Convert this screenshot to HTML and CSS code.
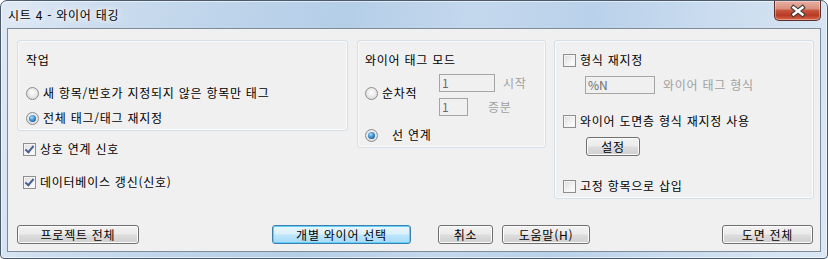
FILE: index.html
```html
<!DOCTYPE html>
<html lang="ko">
<head>
    <meta charset="UTF-8">
    <title>시트 4 - 와이어 태깅</title>
    <link rel="stylesheet" href="styles.css">
</head>
<body>
    <div class="window">
        <!-- Title bar -->
        <div class="titlebar">
            <span class="title">시트 4 - 와이어 태깅</span>
            <div class="close-btn">
                <svg width="45" height="18" viewBox="0 0 45 18">
                    <path d="M18.5 5.5 L27.5 12.5 M27.5 5.5 L18.5 12.5" stroke="#3b3b3b" stroke-width="4.6" stroke-linecap="square" fill="none"/>
                    <path d="M18.5 5.5 L27.5 12.5 M27.5 5.5 L18.5 12.5" stroke="#ffffff" stroke-width="2.4" stroke-linecap="square" fill="none"/>
                </svg>
            </div>
        </div>

        <div class="client">
            <div class="top-row">
                <!-- Left column -->
                <div class="col-left">
                    <div class="group group-job">
                        <div class="group-title">작업</div>
                        <div class="opt opt-new"><span class="radio"></span>새 항목/번호가 지정되지 않은 항목만 태그</div>
                        <div class="opt opt-all"><span class="radio checked"></span>전체 태그/태그 재지정</div>
                    </div>
                    <div class="opt cb-link"><span class="check checked"></span>상호 연계 신호</div>
                    <div class="opt cb-db"><span class="check checked"></span>데이터베이스 갱신(신호)</div>
                </div>

                <!-- Wire tag mode -->
                <div class="group group-mode">
                    <div class="group-title">와이어 태그 모드</div>
                    <div class="seq-row">
                        <div class="opt seq-label"><span class="radio"></span>순차적</div>
                        <div class="fields">
                            <div class="field-row">
                                <div class="textbox tb-start">1</div>
                                <span class="dim lbl-start">시작</span>
                            </div>
                            <div class="field-row">
                                <div class="textbox tb-step">1</div>
                                <span class="dim lbl-step">증분</span>
                            </div>
                        </div>
                    </div>
                    <div class="opt opt-line"><span class="radio checked"></span><span class="line-text">선 연계</span></div>
                </div>

                <!-- Format -->
                <div class="group group-format">
                    <div class="opt"><span class="check"></span>형식 재지정</div>
                    <div class="format-row">
                        <div class="textbox tb-format">%N</div>
                        <span class="dim lbl-format">와이어 태그 형식</span>
                    </div>
                    <div class="opt cb-layer"><span class="check"></span>와이어 도면층 형식 재지정 사용</div>
                    <div class="btn btn-setup">설정</div>
                    <div class="opt cb-fixed"><span class="check"></span>고정 항목으로 삽입</div>
                </div>
            </div>

            <!-- Bottom buttons -->
            <div class="button-row">
                <div class="btn btn-project">프로젝트 전체</div>
                <div class="btn btn-default btn-pick">개별 와이어 선택</div>
                <div class="btn btn-cancel">취소</div>
                <div class="btn btn-help">도움말(H)</div>
                <div class="btn btn-drawing">도면 전체</div>
            </div>
        </div>
    </div>
</body>
</html>
```

FILE: styles.css
```css
body {
    margin: 0;
    padding: 0;
    overflow: hidden;
    background: #ffffff;
    font-family: "Noto Sans CJK KR", "Noto Sans", sans-serif;
    font-size: 12px;
    letter-spacing: 0.75px;
    color: #000;
}

.window {
    width: 828px;
    height: 259px;
    box-sizing: border-box;
    border: 1px solid #4b5b6c;
    border-radius: 7px 7px 4px 4px;
    padding: 0 6px 6px 6px;
    display: flex;
    flex-direction: column;
    background: linear-gradient(100deg, #dfe9f5 0%, #cbdcee 12%, #bcd3ea 28%, #b5cee8 40%, #c4d8ed 55%, #b9d1ea 68%, #cadcef 82%, #dbe7f4 100%);
    box-shadow: inset 0 0 0 1px rgba(255, 255, 255, 0.55);
}

/* Title bar */
.titlebar {
    height: 27px;
    display: flex;
    align-items: flex-start;
    flex: none;
}

.title {
    margin-top: 6px;
    margin-left: 1px;
    line-height: 16px;
    text-shadow: 0 0 6px #fff, 0 0 10px #fff;
}

.close-btn {
    margin-left: auto;
    width: 47px;
    height: 20px;
    box-sizing: border-box;
    border: 1px solid #5b2e2a;
    border-top: none;
    border-radius: 0 0 5px 5px;
    background: linear-gradient(#e9b0a3 0%, #d9907f 40%, #c8563f 50%, #b83a22 75%, #d9664b 100%);
    box-shadow: inset 0 0 0 1px rgba(255, 255, 255, 0.35);
    display: flex;
    align-items: center;
    justify-content: center;
}

.close-btn svg {
    display: block;
}

/* Client area */
.client {
    flex: 1;
    background: #f0f0f0;
    border: 1px solid #7d8b9b;
    padding: 11px 7px 0 9px;
    display: flex;
    flex-direction: column;
}

.top-row {
    display: flex;
    align-items: flex-start;
    height: 159px;
}

.col-left {
    width: 331px;
    flex: none;
}

.group {
    box-sizing: border-box;
    border: 1px solid #d5dfe5;
    border-radius: 3px;
    box-shadow: inset 0 0 0 1px #fafafa;
    flex: none;
}

.group-title {
    height: 16px;
    line-height: 16px;
}

.group-job {
    width: 331px;
    height: 91px;
    padding: 11px 7px 0 8px;
}

.group-mode {
    width: 189px;
    height: 108px;
    margin-left: 9px;
    padding: 11px 7px 0 7px;
}

.group-format {
    width: 260px;
    height: 159px;
    margin-left: 8px;
    padding: 11px 8px 0 8px;
}

/* Options: radio / checkbox rows */
.opt {
    display: flex;
    align-items: center;
    height: 16px;
    line-height: 16px;
    white-space: nowrap;
}

.opt-new { margin-top: 17px; }
.opt-all { margin-top: 9px; }

.cb-link { margin-top: 10px; margin-left: 6px; }
.cb-db { margin-top: 17px; margin-left: 6px; }

.radio {
    width: 13px;
    height: 13px;
    box-sizing: border-box;
    border-radius: 50%;
    border: 1px solid #8c8c8c;
    background: radial-gradient(circle at 50% 40%, #ffffff 0%, #e4e4e4 60%, #cfcfcf 100%);
    margin-right: 4px;
    flex: none;
    position: relative;
}

.radio.checked::after {
    content: "";
    position: absolute;
    left: 2px;
    top: 2px;
    width: 7px;
    height: 7px;
    border-radius: 50%;
    background: radial-gradient(circle at 40% 35%, #a8e0ff 0%, #3c8fd0 45%, #0c3f78 100%);
}

.check {
    width: 13px;
    height: 13px;
    box-sizing: border-box;
    border: 1px solid #8f8f8f;
    background: linear-gradient(135deg, #dcdcdc 0%, #f4f4f4 60%, #ffffff 100%);
    box-shadow: inset 0 0 0 1px #f5f5f5;
    margin-right: 4px;
    flex: none;
    position: relative;
}

.check.checked::after {
    content: "";
    position: absolute;
    left: 3px;
    top: 0px;
    width: 3px;
    height: 7px;
    border-right: 2px solid #4a5f97;
    border-bottom: 2px solid #4a5f97;
    transform: rotate(40deg);
}

/* Wire tag mode */
.seq-row {
    display: flex;
    align-items: flex-start;
    margin-top: 6px;
}

.seq-label {
    width: 74px;
    flex: none;
    margin-top: 11px;
}

.fields {
    display: flex;
    flex-direction: column;
    gap: 6px;
}

.field-row {
    display: flex;
    align-items: center;
    height: 18px;
}

.textbox {
    box-sizing: border-box;
    height: 18px;
    border: 1px solid #a5a5a5;
    background: #f0f0f0;
    color: #6d6d6d;
    line-height: 16px;
    padding-left: 2px;
    letter-spacing: 0;
    flex: none;
}

.tb-start { width: 56px; }
.tb-step { width: 29px; }
.tb-format { width: 70px; }

.dim {
    color: #a0a0a0;
    line-height: 16px;
}

.lbl-start { margin-left: 8px; }
.lbl-step { margin-left: 20px; }

.opt-line { margin-top: 11px; }
.line-text { margin-left: 10px; }

/* Format group */
.format-row {
    display: flex;
    align-items: center;
    margin-top: 8px;
    margin-left: 22px;
}

.lbl-format { margin-left: 8px; }

.cb-layer { margin-top: 19px; }
.cb-fixed { margin-top: 22px; }

/* Buttons */
.btn {
    box-sizing: border-box;
    height: 19px;
    border: 1px solid #707070;
    border-radius: 3px;
    background: linear-gradient(#f2f2f2 0%, #ebebeb 48%, #dddddd 52%, #cfcfcf 100%);
    box-shadow: inset 0 0 0 1px #fcfcfc;
    text-align: center;
    line-height: 17px;
    white-space: nowrap;
    flex: none;
}

.btn-setup {
    width: 54px;
    margin-top: 8px;
    margin-left: 23px;
}

.btn-default {
    border-color: #3c7fb1;
    background: linear-gradient(#eaf6fd 0%, #d9f0fc 48%, #bee6fd 52%, #a7d9f5 100%);
    box-shadow: inset 0 0 0 1px #5fd0f6;
}

.button-row {
    display: flex;
    margin-top: 26px;
}

.btn-project { width: 122px; }
.btn-pick { width: 139px; margin-left: 133px; }
.btn-cancel { width: 55px; margin-left: 27px; }
.btn-help { width: 88px; margin-left: 9px; }
.btn-drawing { width: 91px; margin-left: 132px; }
```
